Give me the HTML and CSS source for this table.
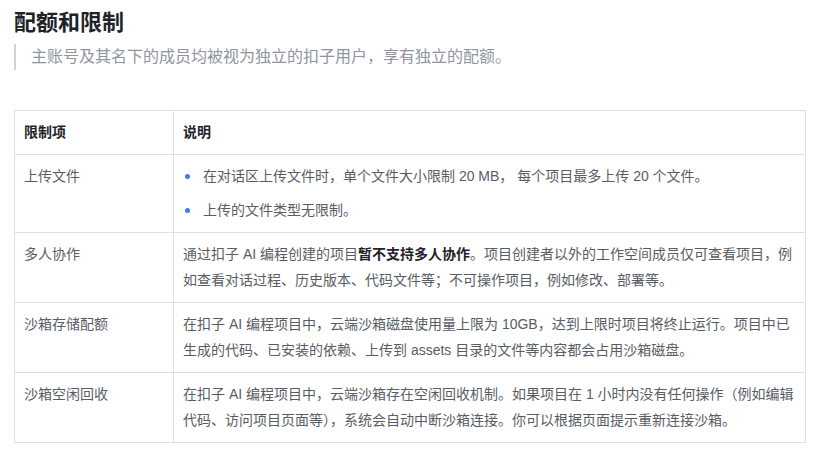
FILE: index.html
```html
<!DOCTYPE html>
<html lang="zh-CN">
<head>
<meta charset="utf-8">
<title>配额和限制</title>
<link rel="stylesheet" href="styles.css">
</head>
<body>
<main class="doc">
  <h2 class="title">配额和限制</h2>
  <blockquote class="note">主账号及其名下的成员均被视为独立的扣子用户，享有独立的配额。</blockquote>
  <table class="limits">
    <colgroup>
      <col class="col-name">
      <col class="col-desc">
    </colgroup>
    <thead>
      <tr><th>限制项</th><th>说明</th></tr>
    </thead>
    <tbody>
      <tr>
        <td>上传文件</td>
        <td>
          <ul class="dots">
            <li>在对话区上传文件时，单个文件大小限制 20 MB，&nbsp;每个项目最多上传 20 个文件。</li>
            <li>上传的文件类型无限制。</li>
          </ul>
        </td>
      </tr>
      <tr>
        <td>多人协作</td>
        <td>通过扣子 AI 编程创建的项目<strong>暂不支持多人协作</strong>。项目创建者以外的工作空间成员仅可查看项目，例如查看对话过程、历史版本、代码文件等；不可操作项目，例如修改、部署等。</td>
      </tr>
      <tr>
        <td>沙箱存储配额</td>
        <td>在扣子 AI 编程项目中，云端沙箱磁盘使用量上限为 10GB，达到上限时项目将终止运行。项目中已生成的代码、已安装的依赖、上传到 assets 目录的文件等内容都会占用沙箱磁盘。</td>
      </tr>
      <tr>
        <td>沙箱空闲回收</td>
        <td>在扣子 AI 编程项目中，云端沙箱存在空闲回收机制。如果项目在 1 小时内没有任何操作（例如编辑代码、访问项目页面等），系统会自动中断沙箱连接。你可以根据页面提示重新连接沙箱。</td>
      </tr>
    </tbody>
  </table>
</main>
</body>
</html>
```

FILE: styles.css
```css
html, body {
  margin: 0;
  padding: 0;
  background: #ffffff;
}

body {
  font-family: "Liberation Sans", "Noto Sans CJK SC", sans-serif;
  color: #585d64;
  font-size: 14px;
}

.doc {
  padding: 7px 14px 0 14px;
}

.title {
  margin: 0;
  font-size: 22px;
  line-height: 32px;
  font-weight: 600;
  color: #1f2329;
}

.note {
  margin: 5px 0 0 0;
  padding: 0 0 0 15px;
  border-left: 2px solid #d0d3d6;
  font-size: 16px;
  line-height: 26px;
  color: #8f959e;
}

.limits {
  margin-top: 40px;
  width: 792px;
  border-collapse: collapse;
  table-layout: fixed;
}

.col-name {
  width: 159px;
}

.limits th,
.limits td {
  border: 1px solid #dee0e3;
  padding: 8px 9px 9px 9px;
  text-align: left;
  vertical-align: top;
  line-height: 26px;
  font-size: 14px;
}

.limits th {
  font-weight: 600;
  color: #1f2329;
}

.limits strong {
  font-weight: 700;
  color: #1f2329;
}

.dots {
  list-style: none;
  margin: 0;
  padding: 0;
}

.dots li {
  display: flex;
  align-items: center;
}

.dots li + li {
  margin-top: 8px;
}

.dots li::before {
  content: "";
  flex: none;
  width: 5px;
  height: 5px;
  border-radius: 50%;
  background: #3b7cf5;
  margin: 0 13px 0 2px;
}
```
